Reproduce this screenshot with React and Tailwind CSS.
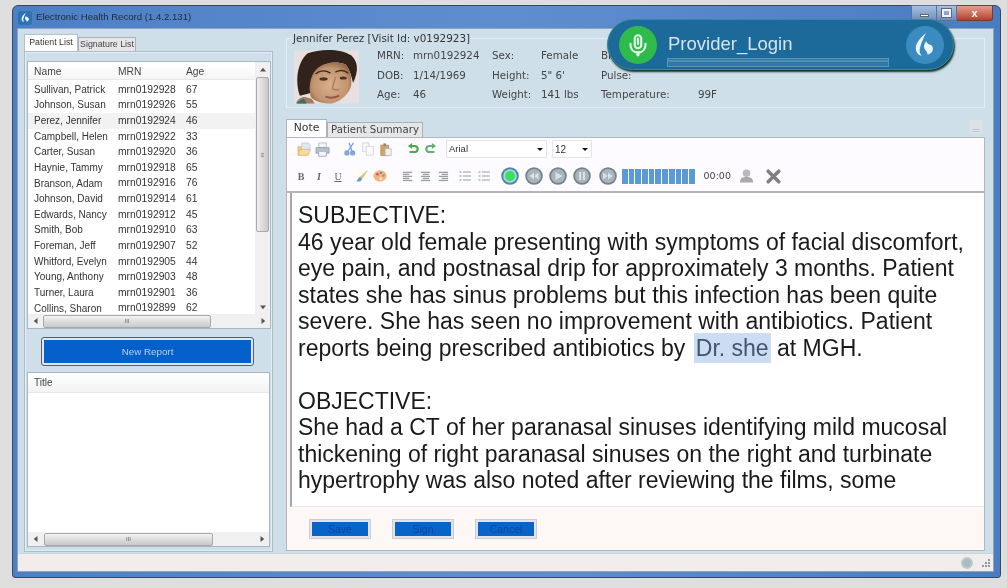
import React from "react";

const patients = [
  ["Sullivan, Patrick", "mrn0192928", 67],
  ["Johnson, Susan", "mrn0192926", 55],
  ["Perez, Jennifer", "mrn0192924", 46],
  ["Campbell, Helen", "mrn0192922", 33],
  ["Carter, Susan", "mrn0192920", 36],
  ["Haynie, Tammy", "mrn0192918", 65],
  ["Branson, Adam", "mrn0192916", 76],
  ["Johnson, David", "mrn0192914", 61],
  ["Edwards, Nancy", "mrn0192912", 45],
  ["Smith, Bob", "mrn0192910", 63],
  ["Foreman, Jeff", "mrn0192907", 52],
  ["Whitford, Evelyn", "mrn0192905", 44],
  ["Young, Anthony", "mrn0192903", 48],
  ["Turner, Laura", "mrn0192901", 36],
  ["Collins, Sharon", "mrn0192899", 62],
];

function Flame({ className }) {
  return (
    <svg viewBox="0 0 24 24" className={className} fill="currentColor">
      <path d="M13 1C8 5 3.500 10 3.500 15c0 3.500 2.500 6.500 5.500 7-1.800-2-2.300-4-1.800-6.500C8 11.500 10 6.500 13 1z" />
      <path d="M13 8.500c-1.800 2.500-2.500 5-1.300 7.200.9 1.600 2.500 2.300 2.800 5.300 3-1 5-3.200 4.800-5.800-.2-2.400-1.800-3.600-3.500-3.700-1-.4-2-1.500-2.800-3z" />
    </svg>
  );
}

function Tri({ dir, className = "" }) {
  const p = { up: "0,6 4,1 8,6", down: "0,2 4,7 8,2", left: "6,0 1,4 6,8", right: "2,0 7,4 2,8" }[dir];
  return (
    <svg viewBox="0 0 8 8" className={"w-[6px] h-[6px] " + className} fill="#555">
      <polygon points={p} />
    </svg>
  );
}

function HScroll({ thumb, gap = "ml-0" }) {
  return (
    <div className="h-[14px] flex items-center bg-[#f0f0f0] shrink-0">
      <div className="w-[15px] flex justify-center">
        <Tri dir="left" />
      </div>
      <div className={"h-[13px] flex items-center justify-center rounded-[2px] border border-[#a9a9a9] bg-gradient-to-b from-[#f2f2f2] to-[#c9c9c9] text-[6px] text-[#666] leading-none " + thumb + " " + gap}>
        III
      </div>
      <div className="flex-1" />
      <div className="w-[15px] flex justify-center">
        <Tri dir="right" />
      </div>
    </div>
  );
}

function Photo() {
  return (
    <svg viewBox="0 0 66 54" className="w-[65px] h-[54px] shrink-0 mt-[2px]">
      <defs>
        <filter id="soft" x="-10%" y="-10%" width="120%" height="120%"><feGaussianBlur stdDeviation="0.800" /></filter>
        <radialGradient id="skin" cx="50%" cy="55%" r="60%">
          <stop offset="0%" stopColor="#d9b08e" />
          <stop offset="70%" stopColor="#c2946f" />
          <stop offset="100%" stopColor="#8f6145" />
        </radialGradient>
      </defs>
      <rect width="66" height="54" fill="#e8dfe0" />
      <g filter="url(#soft)">
        <path d="M6 46C1 32 3 12 14 3c12-5 34-5 44 2 7 6 8 16 2 28-2-8-4-15-8-19-9-3-18-2-26 3-6 6-9 16-8 26-4 1-8 2-12 3z" fill="#33211b" />
        <path d="M17 47c-3-11 0-24 8-30 8-5 18-6 27-3 5 5 7 14 6 22-2 8-10 16-20 18-9 0-17-2-21-7z" fill="url(#skin)" />
        <path d="M22 24c4-4 10-4 15-1M42 22c4-2 9-2 13 1" stroke="#3d2a20" strokeWidth="1.500" fill="none" />
        <ellipse cx="30" cy="29" rx="4.200" ry="1.700" fill="#4c3326" />
        <ellipse cx="50" cy="28" rx="3.600" ry="1.600" fill="#4c3326" />
        <path d="M42 27c-1 6-3 9-3 12 2 1.500 6 1.500 7 0" stroke="#a5775a" strokeWidth="1.300" fill="none" />
        <path d="M32 47c4 1.500 9 1.500 14-1" stroke="#8f5548" strokeWidth="2" fill="none" />
        <path d="M2 54c1-4 4-6 8-7l8 2 3 5z" fill="#a87a5c" />
        <path d="M3 54c2-3 4-4 7-5l3 5z" fill="#2f7467" />
      </g>
    </svg>
  );
}

const Ico = ({ w = 18, children, className = "" }) => (
  <span className={"h-[18px] flex items-center justify-center shrink-0 " + className} style={{ width: w }}>{children}</span>
);

function Select({ label, className }) {
  return (
    <div className={"h-[18px] border border-[#e4e4e8] rounded-[1px] bg-white flex items-center justify-between pl-[2px] pr-[3px] font-['Liberation_Sans',sans-serif] text-[9.500px] text-[#333] " + className}>
      <span>{label}</span>
      <svg viewBox="0 0 8 4" className="w-[6px] h-[3px]" fill="#111"><polygon points="0,0 8,0 4,4" /></svg>
    </div>
  );
}

function Media({ d }) {
  return (
    <svg viewBox="0 0 18 18" className="w-[18px] h-[18px]">
      <circle cx="9" cy="9" r="8.800" fill="#75848c" />
      <circle cx="9" cy="9" r="7" fill="#a9b5bb" />
      <path d={d} fill="#d9e1e5" />
    </svg>
  );
}

function AlignIcon({ kind }) {
  const lines = { l: [[1, 11], [1, 8], [1, 11], [1, 8], [1, 11]], c: [[1, 11], [3, 8], [1, 11], [3, 8], [1, 11]], r: [[1, 11], [4, 8], [1, 11], [4, 8], [1, 11]] }[kind];
  return (
    <svg viewBox="0 0 12 12" className="w-[11px] h-[11px]" stroke="#9a9ea4" strokeWidth="1.400">
      {lines.map(([a, b], i) => (<line key={i} x1={a} x2={a + b - 1} y1={1.500 + i * 2.200} y2={1.500 + i * 2.200} />))}
    </svg>
  );
}

function ListIcon() {
  return (
    <svg viewBox="0 0 12 12" className="w-[12px] h-[12px]" strokeWidth="1.200">
      {[2, 6, 10].map((y) => (
        <g key={y}>
          <line x1="0.500" x2="2.500" y1={y} y2={y} stroke="#7aa6d4" />
          <line x1="4" x2="12" y1={y} y2={y} stroke="#a8b0b8" />
        </g>
      ))}
    </svg>
  );
}

function Toolbar1() {
  return (
    <div className="flex items-center h-[22px] pl-[8px]">
      <Ico>
        <svg viewBox="0 0 16 16" className="w-[15px] h-[15px]"><path d="M1 14V5h4l1 1h5v8z" fill="#f0c878" stroke="#d8ac60" strokeWidth=".6" /><path d="M5 1h7l2 2v6H5z" fill="#dde8f4" stroke="#a8bcd6" strokeWidth=".6" /><path d="M1 14l2-6h11l-2 6z" fill="#f6dc9a" stroke="#d8ac60" strokeWidth=".6" /></svg>
      </Ico>
      <Ico>
        <svg viewBox="0 0 16 16" className="w-[15px] h-[15px]"><path d="M4 1h8v5H4z" fill="#f4f6f8" stroke="#98a6b4" strokeWidth=".7" /><path d="M1 6h14v6h-3v3H4v-3H1z" fill="#b4c0cc" stroke="#8090a0" strokeWidth=".7" /><path d="M4 10h8v5H4z" fill="#f4f6f8" stroke="#98a6b4" strokeWidth=".6" /></svg>
      </Ico>
      <span className="w-[10px]" />
      <Ico>
        <svg viewBox="0 0 16 16" className="w-[14px] h-[14px]" fill="none" stroke="#7aa2d2" strokeWidth="1.500"><path d="M12 1L6 10M7 1l3 9" /><circle cx="4.500" cy="12.500" r="2.200" fill="#86acdc" /><circle cx="11" cy="12.500" r="2.200" fill="#86acdc" /></svg>
      </Ico>
      <Ico>
        <svg viewBox="0 0 16 16" className="w-[14px] h-[14px]"><path d="M2 1h7v10H2z" fill="#f7f7f7" stroke="#d4d4d8" /><path d="M6 5h8v10H6z" fill="#fbfbfb" stroke="#d4d4d8" /></svg>
      </Ico>
      <Ico>
        <svg viewBox="0 0 16 16" className="w-[14px] h-[15px]"><path d="M2 3h9v12H2z" fill="#cfa566" stroke="#a88446" strokeWidth=".7" /><path d="M5 1h3v3H5z" fill="#8a8a8a" /><path d="M7 7h7v8H7z" fill="#eef0f2" stroke="#a8acb2" strokeWidth=".7" /></svg>
      </Ico>
      <span className="w-[9px]" />
      <Ico>
        <svg viewBox="0 0 16 14" className="w-[14px] h-[12px]">
          <path d="M6 3.500h4a3.500 3.500 0 010 7H4" fill="none" stroke="#4aa84e" strokeWidth="2.600" />
          <polygon points="7,0 7,7 2,3.500" fill="#4aa84e" />
        </svg>
      </Ico>
      <Ico className="mr-[6px]">
        <svg viewBox="0 0 16 14" className="w-[14px] h-[12px]">
          <path d="M10 3.500H6a3.500 3.500 0 000 7h6" fill="none" stroke="#62b074" strokeWidth="2.600" />
          <polygon points="9,0 9,7 14,3.500" fill="#62b074" />
        </svg>
      </Ico>
      <Select label="Arial" className="w-[101px]" />
      <Select label="12" className="w-[40px] ml-[5px] text-[10px]" />
    </div>
  );
}

function Toolbar2() {
  const serif = "font-['Liberation_Serif',serif] text-[10px] text-[#666]";
  return (
    <div className="flex items-center h-[26px] pl-[5px] mt-[3px]">
      <Ico><b className={serif}>B</b></Ico>
      <Ico><i className={serif + " font-bold"}>I</i></Ico>
      <Ico className="ml-[1px]"><u className={serif}>U</u></Ico>
      <span className="w-[6px]" />
      <Ico>
        <svg viewBox="0 0 16 16" className="w-[14px] h-[14px]"><path d="M14 2L6 9l2 2z" fill="#e8c860" stroke="#c8a440" strokeWidth=".6" /><path d="M6 9c-3 0-2 4-5 5 3 1 7 0 7-3z" fill="#6a9aca" /></svg>
      </Ico>
      <Ico>
        <svg viewBox="0 0 16 16" className="w-[14px] h-[14px]"><ellipse cx="8" cy="8" rx="7.500" ry="6.500" fill="#f0b47c" /><circle cx="5" cy="6" r="1.500" fill="#d85050" /><circle cx="9" cy="4.500" r="1.300" fill="#5090c8" /><circle cx="12" cy="7.500" r="1.300" fill="#60a860" /><circle cx="9" cy="11" r="1.500" fill="#fff2d0" /></svg>
      </Ico>
      <span className="w-[9px]" />
      <Ico><AlignIcon kind="l" /></Ico>
      <Ico><AlignIcon kind="c" /></Ico>
      <Ico><AlignIcon kind="r" /></Ico>
      <span className="w-[4px]" />
      <Ico><ListIcon /></Ico>
      <Ico className="ml-[1px]"><ListIcon /></Ico>
      <span className="w-[8px]" />
      <Ico>
        <svg viewBox="0 0 18 18" className="w-[18px] h-[18px]"><circle cx="9" cy="9" r="8.800" fill="#4e8aa0" /><circle cx="9" cy="9" r="6.800" fill="#a9d8e4" /><circle cx="9" cy="9" r="5" fill="#38e060" /></svg>
      </Ico>
      <span className="w-[6px]" />
      <Ico><Media d="M9 5.500v7L4.500 9zM13.500 5.500v7L9 9z" /></Ico>
      <span className="w-[6px]" />
      <Ico><Media d="M6.500 5l7 4-7 4z" /></Ico>
      <span className="w-[6px]" />
      <Ico><Media d="M6 5h2.200v8H6zM9.800 5H12v8H9.800z" /></Ico>
      <span className="w-[8px]" />
      <Ico><Media d="M4 5.500l4.500 3.500L4 12.500zM9 5.500l4.500 3.500L9 12.500z" /></Ico>
      <div className="flex gap-[1px] h-[15px] ml-[5px]">
        {Array.from({ length: 11 }).map((_, i) => (
          <span key={i} className="w-[5.700px] bg-[#5b9bd5]" />
        ))}
      </div>
      <span className="ml-[9px] w-[32px] font-['DejaVu_Sans',sans-serif] text-[9.500px] text-[#444]">00:00</span>
      <Ico className="ml-[2px]">
        <svg viewBox="0 0 16 16" className="w-[15px] h-[16px]"><circle cx="8" cy="5" r="4" fill="#b8b8b8" /><path d="M1 15c0-5 3-6 7-6s7 1 7 6z" fill="#a8a8a8" /></svg>
      </Ico>
      <Ico className="ml-[9px]">
        <svg viewBox="0 0 16 16" className="w-[17px] h-[17px]" stroke="#808080" strokeWidth="3.400" strokeLinecap="round"><path d="M3 3l10 10M13 3L3 13" /></svg>
      </Ico>
    </div>
  );
}

function FooterButton({ children }) {
  return (
    <button className="w-[60px] h-[18px] border-[2px] border-[#e2e4ea] outline outline-1 outline-[#c8ccd6] bg-[#0a63c9] text-[10.500px] leading-[12px] text-[#0a4a9c] font-['Liberation_Sans',sans-serif]">
      {children}
    </button>
  );
}

export default function App() {
  return (
    <div className="relative w-[1007px] h-[588px] bg-[#dedede] pt-[5px] pl-[12px] overflow-hidden font-['Liberation_Sans',sans-serif] blur-[0.3px]">
      <div className="w-[989px] h-[573px] rounded-t-[6px] rounded-b-[3px] border border-[#3a4a5e] bg-gradient-to-r from-[#4d7fc4] via-[#5f8ed0] to-[#4a7cc2] flex flex-col pl-[4px] pr-[6px] pb-[5px]">
        {/* Title bar */}
        <div className="h-[22px] flex items-start shrink-0 -mr-[2px]">
          <div className="flex items-center h-[22px] pl-[1px] pt-[1px]">
            <span className="w-[14px] h-[14px] bg-[#2a73b5] rounded-[2px] flex items-center justify-center text-white">
              <Flame className="w-[11px] h-[11px]" />
            </span>
            <span className="ml-[4px] text-[9.600px] text-[#1f2a38]">Electronic Health Record (1.4.2.131)</span>
          </div>
          <div className="ml-auto flex h-[16px] mr-[3px] -mt-[1px]">
            <div className="w-[26px] bg-gradient-to-b from-[#a8c0de] to-[#6d8fbe] border border-[#5a7396] rounded-bl-[3px] flex items-end justify-center pb-[3px]">
              <span className="w-[9px] h-[3px] bg-white border border-[#666]" />
            </div>
            <div className="w-[20px] bg-gradient-to-b from-[#a8c0de] to-[#6d8fbe] border-y border-r border-[#5a7396] flex items-center justify-center">
              <span className="w-[9px] h-[8px] border-2 border-[#f0f0f0] outline outline-1 outline-[#667]" />
            </div>
            <div className="w-[36px] bg-gradient-to-b from-[#e0a090] to-[#b83c2c] border-y border-r border-[#7a3a30] rounded-br-[3px] flex items-center justify-center text-white text-[11px] font-bold leading-none">
              x
            </div>
          </div>
        </div>

        {/* Client */}
        <div className="flex-1 flex flex-col min-h-0 bg-[#cfdfe9] border border-[#8fa5bb]">
          <div className="flex-1 flex min-h-0">
            {/* Left */}
            <div className="w-[267px] shrink-0 pl-[6px] pt-[5px] flex flex-col">
              <div className="flex items-end h-[17px] text-[8.800px] shrink-0 whitespace-nowrap">
                <div className="w-[54px] h-[17px] bg-white border border-b-0 border-[#b4c0ca] flex items-center justify-center text-[#333] leading-none pb-[1px]">Patient List</div>
                <div className="w-[58px] h-[14px] bg-[#e4e6e8] border border-b-0 border-[#a9b0b6] flex items-center justify-center text-[#444] leading-none">Signature List</div>
              </div>
              <div className="w-[249px] h-[501px] border border-[#aebcc8] shadow-[inset_0_0_0_1px_#e4edf3] px-[2px] pt-[9px] flex flex-col">
                {/* patient list */}
                <div className="w-[244px] h-[268px] bg-white border border-[#a8b6c2] flex flex-col shrink-0 overflow-hidden">
                  <div className="flex-1 flex min-h-0">
                    <div className="flex-1 min-w-0 overflow-hidden text-[10px] text-[#333]">
                      <div className="h-[15px] mt-[3px] flex items-center pl-[6px] bg-gradient-to-b from-white to-[#f3f5f6] border-b border-[#e6e8ea] text-[#444] text-[10.300px]">
                        <span className="w-[84px]">Name</span>
                        <span className="w-[68px]">MRN</span>
                        <span>Age</span>
                      </div>
                      <div className="mt-[2px]">
                        {patients.map(([n, m, a]) => (
                          <div key={m} className={"h-[15.640px] flex items-center pl-[6px] leading-none " + (a === 46 ? "bg-[#f2f2f3]" : "")}>
                            <span className="w-[84px] whitespace-nowrap">{n}</span>
                            <span className="w-[68px] text-[10.300px]">{m}</span>
                            <span className="text-[10.300px]">{a}</span>
                          </div>
                        ))}
                      </div>
                    </div>
                    <div className="w-[15px] bg-[#f0f0f0] flex flex-col items-center shrink-0">
                      <div className="h-[15px] flex items-center"><Tri dir="up" /></div>
                      <div className="w-[13px] h-[155px] border border-[#a9a9a9] rounded-[2px] bg-gradient-to-r from-[#f0f0f0] to-[#c8c8c8] flex items-center justify-center text-[6px] text-[#666] leading-none">≡</div>
                      <div className="flex-1" />
                      <div className="h-[15px] flex items-center"><Tri dir="down" /></div>
                    </div>
                  </div>
                  <HScroll thumb="w-[168px]" />
                </div>
                <div className="h-[43px] shrink-0 flex items-center pl-[15px] pt-[2px]">
                  <button className="w-[211px] h-[27px] border-[2px] border-[#dfe6ec] outline outline-1 outline-[#55606c] rounded-[2px] bg-[#0660cc] text-[9.800px] text-[#b8d0ea] pt-[1px]">New Report</button>
                </div>
                <div className="w-[243px] h-[175px] bg-white border border-[#a8b6c2] flex flex-col shrink-0">
                  <div className="h-[20px] flex items-center pl-[6px] bg-gradient-to-b from-white to-[#f1f3f4] border-b border-[#e6e8ea] text-[10px] text-[#444]">Title</div>
                  <div className="flex-1" />
                  <HScroll thumb="w-[169px]" gap="ml-[1px]" />
                </div>
              </div>
            </div>

            {/* Right */}
            <div className="flex-1 min-w-0 pl-[1px] flex flex-col">
              <fieldset className="w-[699px] h-[75px] border border-[#e4edf3] mt-[4px] px-[7px] shrink-0 flex font-['DejaVu_Sans',sans-serif] text-[10.300px] text-[#444]">
                <legend className="-ml-[2px] px-[1px] text-[10.400px] leading-[11px] text-[#333]">Jennifer Perez [Visit Id: v0192923]</legend>
                <div className="flex w-full pt-[4px]">
                  <Photo />
                  <div className="ml-[18px] w-[115px]">
                    <div className="flex flex-col gap-[5.500px]">
                      {[["MRN:", "mrn0192924"], ["DOB:", "1/14/1969"], ["Age:", "46"]].map(([k, v]) => (
                        <div key={k} className="h-[14px] leading-[14px] flex"><span className="w-[36px]">{k}</span><span>{v}</span></div>
                      ))}
                    </div>
                  </div>
                  <div className="w-[109px]">
                    <div className="flex flex-col gap-[5.500px]">
                      {[["Sex:", "Female"], ["Height:", "5\" 6'"], ["Weight:", "141 lbs"]].map(([k, v]) => (
                        <div key={k} className="h-[14px] leading-[14px] flex"><span className="w-[49px]">{k}</span><span>{v}</span></div>
                      ))}
                    </div>
                  </div>
                  <div className="flex flex-col gap-[5.500px]">
                    {[["BP:", ""], ["Pulse:", ""], ["Temperature:", "99F"]].map(([k, v]) => (
                      <div key={k} className="h-[14px] leading-[14px] flex"><span className="w-[97px]">{k}</span><span>{v}</span></div>
                    ))}
                  </div>
                </div>
              </fieldset>
              <div className="flex items-end h-[25px] mt-[4px] shrink-0 font-['DejaVu_Sans',sans-serif] text-[10.200px] w-[699px]">
                <div className="w-[41px] h-[18px] bg-white border border-b-0 border-[#a9b6c0] flex items-center justify-center text-[#333] text-[10.800px]">Note</div>
                <div className="w-[96px] h-[15px] bg-[#e4e6e8] border border-b-0 border-[#a9b0b6] flex items-center justify-center text-[#444] leading-none">Patient Summary</div>
                <div className="ml-auto mb-[3px] mr-[3px] w-[12px] h-[14px] bg-[#d9e2e6] rounded-[1px] border border-[#dde5ea] flex flex-col justify-end gap-[1px] p-[1px]">
                  <span className="h-[1px] bg-[#c2ccd0]" /><span className="h-[1px] bg-[#c2ccd0]" />
                </div>
              </div>
              <div className="w-[699px] h-[414px] bg-[#fdf8f6] border border-[#b4b8bc] flex flex-col shrink-0">
                <div className="h-[55px] bg-[#fdfbff] shrink-0 border-b-2 border-[#b5b5b8]">
                  <Toolbar1 />
                  <Toolbar2 />
                </div>
                <div className="h-[314px] shrink-0 bg-white border-l-2 border-[#a8a8a8] ml-[3px] border-b border-b-[#e8e8e8] pl-[6px] pt-[9px] text-[23px] leading-[26.500px] text-[#1a1a1a] overflow-hidden">
                  <div>SUBJECTIVE:</div>
                  <div>46 year old female presenting with symptoms of facial discomfort,</div>
                  <div>eye pain, and postnasal drip for approximately 3 months. Patient</div>
                  <div>states she has sinus problems but this infection has been quite</div>
                  <div>severe. She has seen no improvement with antibiotics. Patient</div>
                  <div>reports being prescribed antibiotics by <span className="bg-[#ccdcf2] text-[#3f566f] py-[2px] px-[2px] ml-[2px]">Dr. she</span> at MGH.</div>
                  <div className="h-[26.500px]" />
                  <div>OBJECTIVE:</div>
                  <div>She had a CT of her paranasal sinuses identifying mild mucosal</div>
                  <div>thickening of right paranasal sinuses on the right and turbinate</div>
                  <div>hypertrophy was also noted after reviewing the films, some</div>
                </div>
                <div className="flex-1 flex items-center pl-[23px] gap-[23px]">
                  <FooterButton>Save</FooterButton>
                  <FooterButton>Sign</FooterButton>
                  <FooterButton>Cancel</FooterButton>
                </div>
              </div>
            </div>
          </div>

          {/* Status bar */}
          <div className="h-[18px] shrink-0 bg-[#f3ecec] border-t border-[#c8d4dc] flex items-center justify-end pr-[2px]">
            <span className="w-[12px] h-[12px] rounded-full bg-[#a9bcc0] border-2 border-[#bccbce] mr-[8px]" />
            <svg viewBox="0 0 10 10" className="w-[10px] h-[10px]" fill="#8a9ca8"><path d="M7 1h2v2H7zM4 4h2v2H4zM7 4h2v2H7zM1 7h2v2H1zM4 7h2v2H4zM7 7h2v2H7z" /></svg>
          </div>
        </div>
      </div>

      {/* Floating dictation bubble */}
      <div className="absolute left-[607px] top-[19px] w-[347px] h-[51px] rounded-[26px] bg-[#1c6a9a] border border-[#3c8a92] shadow-[1px_2px_2px_#14342c] flex items-center pl-[11px] pr-[9px]">
        <span className="w-[38px] h-[38px] rounded-full bg-[#2fbb4c] flex items-center justify-center shrink-0">
          <svg viewBox="0 0 24 24" className="w-[26px] h-[26px]" fill="none" stroke="#e4f6e6" strokeWidth="2" strokeLinecap="round">
            <rect x="9" y="3" width="6" height="12" rx="3" fill="#2fbb4c" />
            <path d="M12 6v5" />
            <path d="M5 11c0 5 3 8 7 8s7-3 7-8" />
            <path d="M12 19v2" strokeWidth="3" />
          </svg>
        </span>
        <div className="ml-[11px] relative flex-1 h-full">
          <div className="absolute left-[0px] top-[12px] text-[18.500px] leading-[24px] text-[#d3e4ee]">Provider_Login</div>
          <div className="absolute left-[-1px] top-[38px] w-[222px] h-[9px] border border-[#5a94b6] bg-[#2f79a4]">
            <div className="h-[2px] bg-[#7fb2ce]/40 mt-[1px]" />
          </div>
        </div>
        <span className="w-[38px] h-[38px] rounded-full bg-[#3a8cc0] flex items-center justify-center shrink-0 text-[#eef6fb]">
          <Flame className="w-[26px] h-[26px]" />
        </span>
      </div>
    </div>
  );
}
